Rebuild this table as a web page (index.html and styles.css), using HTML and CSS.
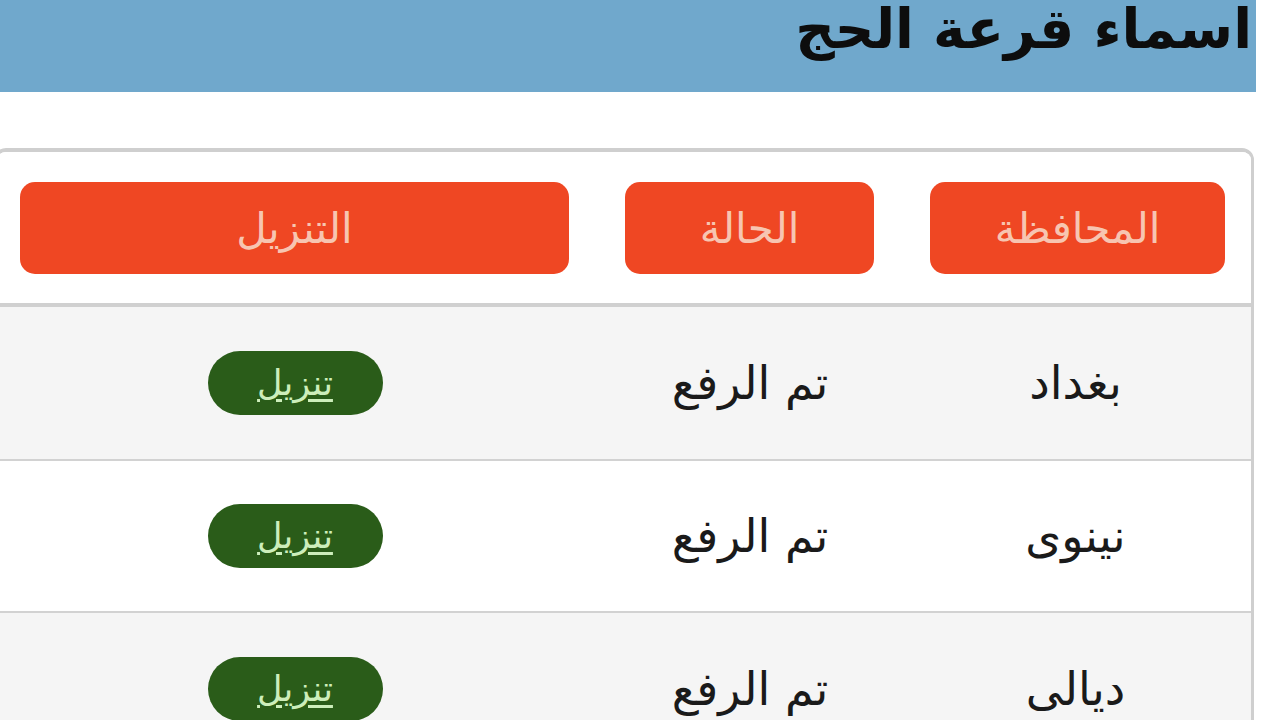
FILE: index.html
```html
<!DOCTYPE html>
<html lang="ar" dir="rtl">
<head>
<meta charset="utf-8">
<title>اسماء قرعة الحج</title>
<link rel="stylesheet" href="styles.css">
</head>
<body>
<header class="banner">
  <h1 class="banner-title">اسماء قرعة الحج</h1>
</header>
<main class="card">
  <div class="row head">
    <div class="cell"><span class="head-btn">المحافظة</span></div>
    <div class="cell"><span class="head-btn">الحالة</span></div>
    <div class="cell"><span class="head-btn">التنزيل</span></div>
  </div>
  <div class="row odd">
    <div class="cell text">بغداد</div>
    <div class="cell text">تم الرفع</div>
    <div class="cell action"><a class="dl" href="#">تنزيل</a></div>
  </div>
  <div class="row even">
    <div class="cell text">نينوى</div>
    <div class="cell text">تم الرفع</div>
    <div class="cell action"><a class="dl" href="#">تنزيل</a></div>
  </div>
  <div class="row odd">
    <div class="cell text">ديالى</div>
    <div class="cell text">تم الرفع</div>
    <div class="cell action"><a class="dl" href="#">تنزيل</a></div>
  </div>
</main>
</body>
</html>
```
FILE: styles.css
```css
html, body {
  margin: 0;
  padding: 0;
  background: #ffffff;
  overflow: hidden;
}
body {
  width: 1280px;
  height: 720px;
  font-family: "DejaVu Sans", sans-serif;
  color: #1a1a1a;
}
.banner {
  width: 1256px;
  margin-right: 24px;
  height: 92px;
  background: #70a8cc;
  display: flex;
  align-items: flex-start;
  box-sizing: border-box;
  padding-right: 4px;
  overflow: hidden;
}
.banner-title {
  margin: 0;
  margin-top: -9px;
  font-family: "DejaVu Sans", sans-serif;
  font-weight: bold;
  font-size: 55px;
  color: #0d0d0d;
  line-height: 1.4;
}
.card {
  margin-top: 56px;
  width: 1260px;
  margin-right: 26px;
  border: 3px solid #cfcfcf;
  border-top-width: 4px;
  border-radius: 12px;
  overflow: hidden;
  box-sizing: border-box;
}
.row {
  display: grid;
  grid-template-columns: 351px 300px 1fr;
  border-bottom: 2px solid #d2d2d2;
}
.row.head {
  background: #ffffff;
  border-bottom: 4px solid #d0d0d0;
  padding: 30px 0 29px;
}
.row.odd { background: #f5f5f5; height: 154px; box-sizing: border-box; }
.row.even { background: #ffffff; height: 152px; box-sizing: border-box; }
.cell {
  display: flex;
  align-items: center;
  justify-content: center;
}
.cell.action { padding-right: 7px; }
.head .cell { padding: 0 26px 0 30px; }
.head .cell:nth-child(2) { padding: 0 26px 0 25px; }
.head .cell:nth-child(3) { padding: 0 31px 0 23px; }
.head-btn {
  flex: 1;
  height: 92px;
  background: #ef4723;
  border-radius: 15px;
  color: #f7c5b1;
  font-size: 42px;
  display: flex;
  align-items: center;
  justify-content: center;
}
.text {
  font-size: 46px;
  color: #1a1a1a;
}
.dl {
  width: 175px;
  height: 64px;
  border-radius: 32px;
  background: #2a5c19;
  color: #cdeebb;
  font-size: 35px;
  display: flex;
  align-items: center;
  justify-content: center;
  text-decoration: underline;
  text-underline-offset: 4px;
}
```
